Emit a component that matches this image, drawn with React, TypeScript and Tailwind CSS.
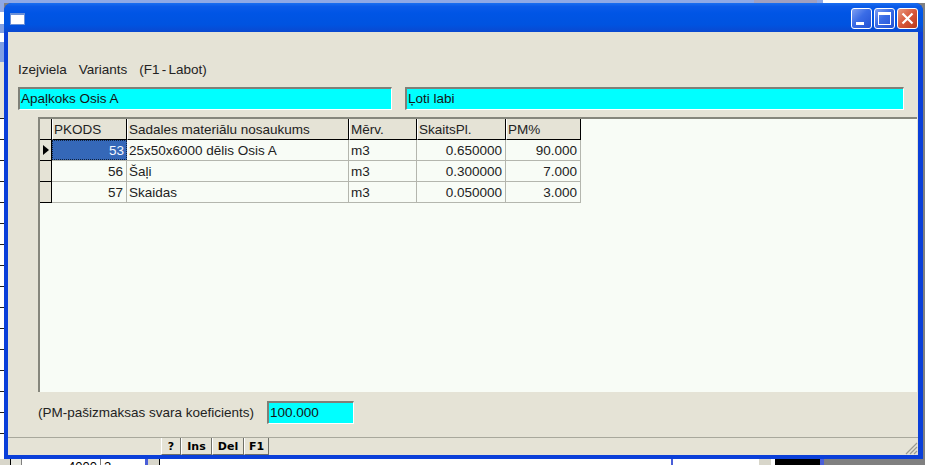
import React from "react";

const font = { fontFamily: '"Liberation Sans", Arial, sans-serif' };

const columns = [
  { label: "PKODS", width: "w-[75px]" },
  { label: "Sadales materiālu nosaukums", width: "w-[222px]" },
  { label: "Mērv.", width: "w-[68px]" },
  { label: "SkaitsPl.", width: "w-[89px]" },
  { label: "PM%", width: "w-[75px]" },
];

const rows = [
  { code: "53", name: "25x50x6000 dēlis Osis A", unit: "m3", qty: "0.650000", pm: "90.000" },
  { code: "56", name: "Šaļi", unit: "m3", qty: "0.300000", pm: "7.000" },
  { code: "57", name: "Skaidas", unit: "m3", qty: "0.050000", pm: "3.000" },
];

function Field({ value, className }: { value: string; className: string }) {
  return (
    <div
      className={`h-[23px] bg-[#00ffff] border-t-2 border-l-2 border-t-[#7f8078] border-l-[#7f8078] border-r border-b border-r-white border-b-white pl-[1px] text-[13.5px] leading-[20px] text-[#141414] ${className}`}
    >
      {value}
    </div>
  );
}

function Cell({ children, width, right }: { children: React.ReactNode; width: string; right?: boolean }) {
  return (
    <div
      className={`${width} h-full pl-[2px] pr-[2px] border-r border-r-[#b4b6ae] leading-[22px] whitespace-nowrap ${right ? "text-right pr-[3px]" : ""}`}
    >
      {children}
    </div>
  );
}

function Grid() {
  return (
    <div className="ml-[30px] h-[275px] w-[879px] bg-[#f8fcf6] border-t-2 border-l-2 border-t-[#85867c] border-l-[#85867c] text-[13.5px] text-[#222222] overflow-hidden">
      {/* Header */}
      <div className="flex h-[21px]">
        <div className="w-[12px] bg-[#e5e3d6] border-r border-b border-black" />
        {columns.map((col) => (
          <div
            key={col.label}
            className={`${col.width} bg-[#e5e3d6] border-r border-b border-black border-l border-l-white pl-[1px] leading-[22px] whitespace-nowrap`}
          >
            {col.label}
          </div>
        ))}
      </div>
      {/* Rows */}
      {rows.map((row, i) => (
        <div key={row.code} className="flex h-[21px]">
          <div className="w-[12px] bg-[#e5e3d6] border-r border-b border-black flex items-center justify-center">
            {i === 0 && <div className="w-0 h-0 border-y-[5px] border-y-transparent border-l-[6px] border-l-black" />}
          </div>
          <div className="flex border-b border-b-[#b4b6ae]">
            {i === 0 ? (
              <div className="w-[75px] h-full bg-[#3568b8] text-[#f4f8ff] text-right pr-[2px] leading-[20px] border border-dotted border-[#10203a]">
                {row.code}
              </div>
            ) : (
              <Cell width="w-[75px]" right>
                {row.code}
              </Cell>
            )}
            <Cell width="w-[222px]">{row.name}</Cell>
            <Cell width="w-[68px]">{row.unit}</Cell>
            <Cell width="w-[89px]" right>
              {row.qty}
            </Cell>
            <Cell width="w-[75px]" right>
              {row.pm}
            </Cell>
          </div>
        </div>
      ))}
    </div>
  );
}

function StatusButton({ label, width }: { label: string; width: string }) {
  return (
    <button
      className={`${width} h-[17px] bg-[#e5e3d6] border-l border-l-white border-r border-b border-r-[#6f7068] border-b-[#6f7068] text-[11px] leading-[15px] font-bold text-center text-black`}
      style={{ fontFamily: '"DejaVu Sans", sans-serif' }}
    >
      {label}
    </button>
  );
}

function TitleButtons() {
  const blue = "bg-[linear-gradient(135deg,#7f9ff2_0%,#3a6ce6_45%,#2452d4_100%)]";
  return (
    <div className="flex gap-[2px] pr-[5px]">
      <div className={`w-[21px] h-[21px] rounded-[3px] border border-white ${blue} flex items-end pl-[4px] pb-[3px]`}>
        <div className="w-[8px] h-[3px] bg-white" />
      </div>
      <div className={`w-[21px] h-[21px] rounded-[3px] border border-white ${blue} flex items-center justify-center`}>
        <div className="w-[13px] h-[13px] border border-white border-t-[3px]" />
      </div>
      <div className="w-[21px] h-[21px] rounded-[3px] border border-white bg-[linear-gradient(135deg,#e89a80_0%,#d8573a_50%,#b83a1c_100%)] flex items-center justify-center">
        <svg width="13" height="13" viewBox="0 0 13 13">
          <path d="M1.5 1.5 L11.5 11.5 M11.5 1.5 L1.5 11.5" stroke="white" strokeWidth="2.2" />
        </svg>
      </div>
    </div>
  );
}

// bits of the window lying behind the dialog
function LeftStrip() {
  return (
    <div className="w-[4px] flex flex-col bg-white">
      <div className="h-[9px] bg-[#8fa9e6]" />
      <div className="h-[12px] bg-white" />
      <div className="h-[9px] bg-[#7f9fe4]" />
      <div className="h-[9px] bg-white" />
      <div className="h-[20px] bg-[#7f9fe4]" />
      <div className="h-[56px] bg-[#e5e3d6]" />
      {Array.from({ length: 16 }).map((_, i) => (
        <div key={i} className="h-[21px] border-t border-t-[#20201c]" />
      ))}
    </div>
  );
}

function BottomStrip() {
  return (
    <div className="flex h-[6px] overflow-hidden text-[13px] leading-[14px] text-black">
      <div className="w-[11px] bg-[#d8d6ca] border-r border-r-black" />
      <div className="w-[11px] bg-[#e8e8e0] border-r border-r-[#808080]" />
      <div className="w-[79px] bg-white text-right pr-[3px] border-r border-r-[#808080] pt-[1px]">4000</div>
      <div className="w-[44px] bg-white pl-[3px] pt-[1px]">2</div>
      <div className="w-[3px] bg-[#4a5ed8]" />
      <div className="w-[12px] bg-[#d8d6ca] border-r border-r-black" />
      <div className="w-[511px] bg-white" />
      <div className="w-[2px] bg-[#4a5ed8]" />
      <div className="w-[86px] bg-white" />
      <div className="w-[12px] bg-[#d8d6ca]" />
      <div className="w-[4px] bg-white" />
      <div className="w-[45px] bg-black" />
      <div className="w-[4px] bg-[#4a5ed8]" />
      <div className="flex-1 bg-[#808080]" />
    </div>
  );
}

export default function App() {
  return (
    <div className="w-[925px] h-[465px] overflow-hidden bg-[#808080] flex flex-col" style={font}>
      {/* Behind the dialog, top edge */}
      <div className="flex h-[3px]">
        <div className="w-[754px] bg-[#8fa9e6]" />
        <div className="w-[63px] bg-[#a0a0c0]" />
        <div className="w-[6px] bg-[#8fa9e6]" />
        <div className="flex-1 bg-white" />
      </div>

      <div className="flex h-[456px]">
        <LeftStrip />
        {/* Dialog window */}
        <div className="w-[919px] h-full rounded-t-[8px] bg-[#0a3fd9] flex flex-col overflow-hidden">
          <div className="h-[29px] shrink-0 flex items-center justify-between bg-[linear-gradient(180deg,#1a6ff0_0%,#0a5ae8_12%,#0055e5_35%,#0053e0_75%,#0a48d0_100%)]">
            <div className="ml-[6px] mt-[3px] w-[15px] h-[12px] bg-white border border-[#6a90d8] border-t-[2px]" />
            <div className="mt-[2px]">
              <TitleButtons />
            </div>
          </div>

          <div className="ml-[4px] mr-[5px] mb-[4px] flex-1 bg-[#e5e3d6] flex flex-col min-h-0">
            <div className="flex gap-[12px] pl-[10px] pt-[30px] h-[45px] text-[13.5px] leading-[15px] text-[#222222]">
              <span>Izejviela</span>
              <span>Variants</span>
              <span className="[word-spacing:-1.5px]">(F1 - Labot)</span>
            </div>

            <div className="flex gap-[13px] pl-[10px] mt-[10px]">
              <Field value="Apaļkoks Osis A" className="w-[374px]" />
              <Field value="Ļoti labi" className="w-[499px]" />
            </div>

            <div className="mt-[7px]">
              <Grid />
            </div>

            <div className="flex pl-[30px] pt-[9px] h-[45px] text-[13.5px] text-[#222222]">
              <span className="w-[229px] leading-[23px]">(PM-pašizmaksas svara koeficients)</span>
              <Field value="100.000" className="w-[87px]" />
            </div>

            {/* Status bar */}
            <div className="relative flex-1 flex border-t border-t-[#a8a89c] pl-[153px]">
              <StatusButton label="?" width="w-[20px]" />
              <StatusButton label="Ins" width="w-[31px]" />
              <StatusButton label="Del" width="w-[32px]" />
              <StatusButton label="F1" width="w-[25px]" />
              <svg className="absolute right-0 bottom-0" width="13" height="13" viewBox="0 0 13 13">
                <path d="M12 1 L1 12 M12 5 L5 12 M12 9 L9 12" stroke="#9a9a90" strokeWidth="1.2" />
              </svg>
            </div>
          </div>
        </div>
        <div className="flex-1 bg-[#808080]" />
      </div>

      <BottomStrip />
    </div>
  );
}
